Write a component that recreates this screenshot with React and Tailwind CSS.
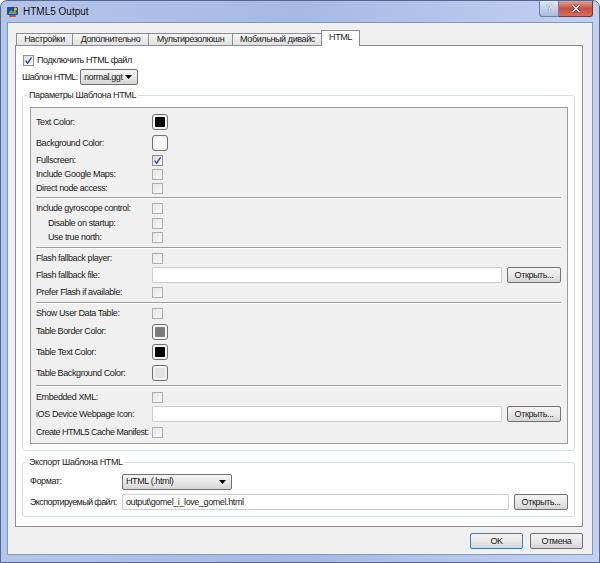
import React from 'react'

function Check({ checked, disabled }) {
  return (
    <div className={`w-[11px] h-[11px] shrink-0 border flex items-center justify-center ${disabled ? 'border-[#aeaeae] bg-gradient-to-br from-[#e6e6e6] to-[#f8f8f8]' : 'border-[#8e8f8f] bg-gradient-to-br from-[#dcdcdc] to-white'}`}>
      {checked && (
        <svg width="9" height="9" viewBox="0 0 9 9">
          <path d="M1.6 4.6 L3.6 7.2 L7.6 1.4" stroke="#2f47a8" strokeWidth="1.4" fill="none" />
        </svg>
      )}
    </div>
  )
}

function Swatch({ color }) {
  return (
    <div className="w-[16px] h-[16px] shrink-0 rounded-[3px] border border-[#6f6f6f] bg-[#f4f4f4] p-[2px]">
      <div className={`w-full h-full rounded-[1px] ${color}`} />
    </div>
  )
}

function Btn({ children, className = '', def }) {
  return (
    <div className={`h-[16px] shrink-0 rounded-[2px] border ${def ? 'border-[#3c7fb1]' : 'border-[#707070]'} bg-gradient-to-b from-[#f4f4f4] via-[#e8e8e8] to-[#d5d5d5] flex items-center justify-center ${className}`}>
      {children}
    </div>
  )
}

function Input({ value = '', className = '' }) {
  return (
    <div className={`h-[16px] border border-[#c9ced6] rounded-[1px] bg-white flex items-center px-[3px] ${className}`}>
      {value}
    </div>
  )
}

function Combo({ value, className = '' }) {
  return (
    <div className={`h-[16px] shrink-0 rounded-[2px] border border-[#707070] bg-gradient-to-b from-[#f4f4f4] via-[#e8e8e8] to-[#d5d5d5] flex items-center pl-[3px] pr-[5px] ${className}`}>
      <span className="flex-1">{value}</span>
      <svg width="7" height="4" viewBox="0 0 7 4"><path d="M0 0 H7 L3.5 4 Z" fill="#000" /></svg>
    </div>
  )
}

function Row({ h, label, indent, children }) {
  return (
    <div className={`flex items-center ${h}`}>
      <div className={`w-[116px] shrink-0 ${indent ? 'pl-[12px]' : ''}`}>{label}</div>
      {children}
    </div>
  )
}

function Sep({ h }) {
  return (
    <div className={`flex flex-col justify-center pr-[6px] ${h}`}>
      <div className="h-px bg-[#a0a0a0]" />
      <div className="h-px bg-white" />
    </div>
  )
}

export default function App() {
  return (
    <div className="w-[600px] h-[563px] bg-white font-['Liberation_Sans',Arial,sans-serif] text-[9px] tracking-[-0.4px] text-[#1a1a1a] leading-none whitespace-nowrap select-none">
      <div className="w-full h-full rounded-t-[7px] border border-[#55678f] bg-gradient-to-r from-[#b4c5ea] via-[#a6b9e5] to-[#c3d1f1] flex flex-col">
        {/* заголовок окна */}
        <div className="h-[21px] flex items-start shrink-0">
          <div className="flex items-center h-[21px] pl-[5px] gap-[4px]">
            <svg width="13" height="13" viewBox="0 0 13 13">
              <rect x="1" y="2" width="11" height="8" rx="1" fill="#2a4c8c" />
              <path d="M2 9 L5 5 L7 7 L9 4 L11 9 Z" fill="#5fb14a" />
              <circle cx="9.5" cy="4" r="1.5" fill="#f3c21d" />
              <rect x="3" y="10" width="7" height="2" rx="1" fill="#d7462e" />
            </svg>
            <span className="text-[10px] tracking-normal text-[#111]">HTML5 Output</span>
          </div>
          <div className="ml-auto mr-[6px] flex">
            <div className="w-[20px] h-[16px] rounded-bl-[3px] border border-t-0 border-[#6b7fa6] bg-gradient-to-b from-[#e2e9f7] to-[#a9badf] flex items-center justify-center text-[10px] font-bold text-[#f8f8f8] [text-shadow:0_0_1px_#334]">?</div>
            <div className="w-[34px] h-[16px] rounded-br-[3px] border border-t-0 border-l-0 border-[#6b3a3a] bg-gradient-to-b from-[#e0a090] via-[#c8503f] to-[#d8705a] flex items-center justify-center">
              <svg width="10" height="9" viewBox="0 0 10 9">
                <path d="M1.5 1 L8.5 8 M8.5 1 L1.5 8" stroke="#5a2a2a" strokeWidth="3" />
                <path d="M1.5 1 L8.5 8 M8.5 1 L1.5 8" stroke="#fff" strokeWidth="1.6" />
              </svg>
            </div>
          </div>
        </div>

        {/* клиентская область */}
        <div className="mx-[6px] mb-[7px] flex-1 border border-[#8797b8] bg-[#f0f0f0] flex flex-col pt-[7px] pl-[7px] pr-[9px]">
          {/* вкладки */}
          <div className="h-[15px] flex items-end pl-[1px]">
            <div className="h-[12px] w-[57px] border border-b-0 border-[#898c95] bg-gradient-to-b from-[#f6f6f6] to-[#e1e1e1] flex items-center justify-center">Настройки</div>
            <div className="h-[12px] w-[77px] -ml-px border border-b-0 border-[#898c95] bg-gradient-to-b from-[#f6f6f6] to-[#e1e1e1] flex items-center justify-center">Дополнительно</div>
            <div className="h-[12px] w-[85px] -ml-px border border-b-0 border-[#898c95] bg-gradient-to-b from-[#f6f6f6] to-[#e1e1e1] flex items-center justify-center">Мультирезолюшн</div>
            <div className="h-[12px] w-[91px] -ml-px border border-b-0 border-[#898c95] bg-gradient-to-b from-[#f6f6f6] to-[#e1e1e1] flex items-center justify-center">Мобильный дивайс</div>
            <div className="relative z-10 h-[16px] w-[39px] -ml-[2px] -mb-px border border-b-0 border-[#898c95] bg-white flex items-center justify-center pb-[2px]">HTML</div>
          </div>

          {/* страница вкладки */}
          <div className="h-[482px] border border-[#898c95] bg-white pt-[8px] pl-[6px] pr-[7px]">
            <div className="h-[13px] flex items-center gap-[3px] pl-[1px]">
              <Check checked />
              <span>Подключить HTML файл</span>
            </div>
            <div className="mt-[2px] h-[16px] flex items-center">
              <span className="w-[58px] shrink-0 tracking-[-0.6px]">Шаблон HTML:</span>
              <Combo value="normal.ggt" className="w-[58px]" />
            </div>

            {/* Параметры Шаблона HTML */}
            <div className="relative mt-[10px] border border-[#d5dfe5] rounded-[3px] pt-[11px] pl-[7px] pr-[6px] pb-[6px]">
              <span className="absolute -top-[5px] left-[4px] px-[2px] bg-white">Параметры Шаблона HTML</span>
              <div className="border border-[#9c9c9c] bg-[#f0f0f0] pt-[4px] pl-[5px]">
                <Row h="h-[20px]" label="Text Color:"><Swatch color="bg-black" /></Row>
                <Row h="h-[22px]" label="Background Color:"><Swatch color="bg-white" /></Row>
                <Row h="h-[13px]" label="Fullscreen:"><Check checked /></Row>
                <Row h="h-[14px]" label="Include Google Maps:"><Check disabled /></Row>
                <Row h="h-[14px]" label="Direct node access:"><Check disabled /></Row>
                <Sep h="h-[6px]" />
                <Row h="h-[15px]" label="Include gyroscope control:"><Check disabled /></Row>
                <Row h="h-[14px]" label="Disable on startup:" indent><Check disabled /></Row>
                <Row h="h-[15px]" label="Use true north:" indent><Check disabled /></Row>
                <Sep h="h-[5px]" />
                <Row h="h-[16px]" label="Flash fallback player:"><Check disabled /></Row>
                <Row h="h-[18px]" label="Flash fallback file:">
                  <Input className="flex-1" />
                  <Btn className="w-[54px] ml-[5px] mr-[6px]">Открыть...</Btn>
                </Row>
                <Row h="h-[16px]" label="Prefer Flash if available:"><Check disabled /></Row>
                <Sep h="h-[5px]" />
                <Row h="h-[17px]" label="Show User Data Table:"><Check disabled /></Row>
                <Row h="h-[19px]" label="Table Border Color:"><Swatch color="bg-[#7b7b7b]" /></Row>
                <Row h="h-[22px]" label="Table Text Color:"><Swatch color="bg-black" /></Row>
                <Row h="h-[20px]" label="Table Background Color:"><Swatch color="bg-[#e2e2e2]" /></Row>
                <Sep h="h-[5px]" />
                <Row h="h-[18px]" label="Embedded XML:"><Check disabled /></Row>
                <Row h="h-[16px]" label="iOS Device Webpage Icon:">
                  <Input className="flex-1" />
                  <Btn className="w-[54px] ml-[5px] mr-[6px]">Открыть...</Btn>
                </Row>
                <Row h="h-[21px]" label={<span className="tracking-[-0.5px]">Create HTML5 Cache Manifest:</span>}><Check disabled /></Row>
              </div>
            </div>

            {/* Экспорт Шаблона HTML */}
            <div className="relative mt-[11px] border border-[#d5dfe5] rounded-[3px] pt-[11px] pl-[7px] pr-[6px] pb-[6px]">
              <span className="absolute -top-[5px] left-[4px] px-[2px] bg-white">Экспорт Шаблона HTML</span>
              <div className="h-[15px] flex items-center">
                <span className="w-[92px] shrink-0">Формат:</span>
                <Combo value="HTML (.html)" className="w-[110px]" />
              </div>
              <div className="mt-[5px] h-[16px] flex items-center">
                <span className="w-[92px] shrink-0 tracking-[-0.6px]">Экспортируемый файл:</span>
                <Input value="output\gomel_i_love_gomel.html" className="flex-1" />
                <Btn className="w-[54px] ml-[5px]">Открыть...</Btn>
              </div>
            </div>
          </div>

          {/* кнопки диалога */}
          <div className="mt-[6px] h-[16px] flex justify-end gap-[7px]">
            <Btn def className="w-[53px]">OK</Btn>
            <Btn className="w-[53px]">Отмена</Btn>
          </div>
        </div>
      </div>
    </div>
  )
}
